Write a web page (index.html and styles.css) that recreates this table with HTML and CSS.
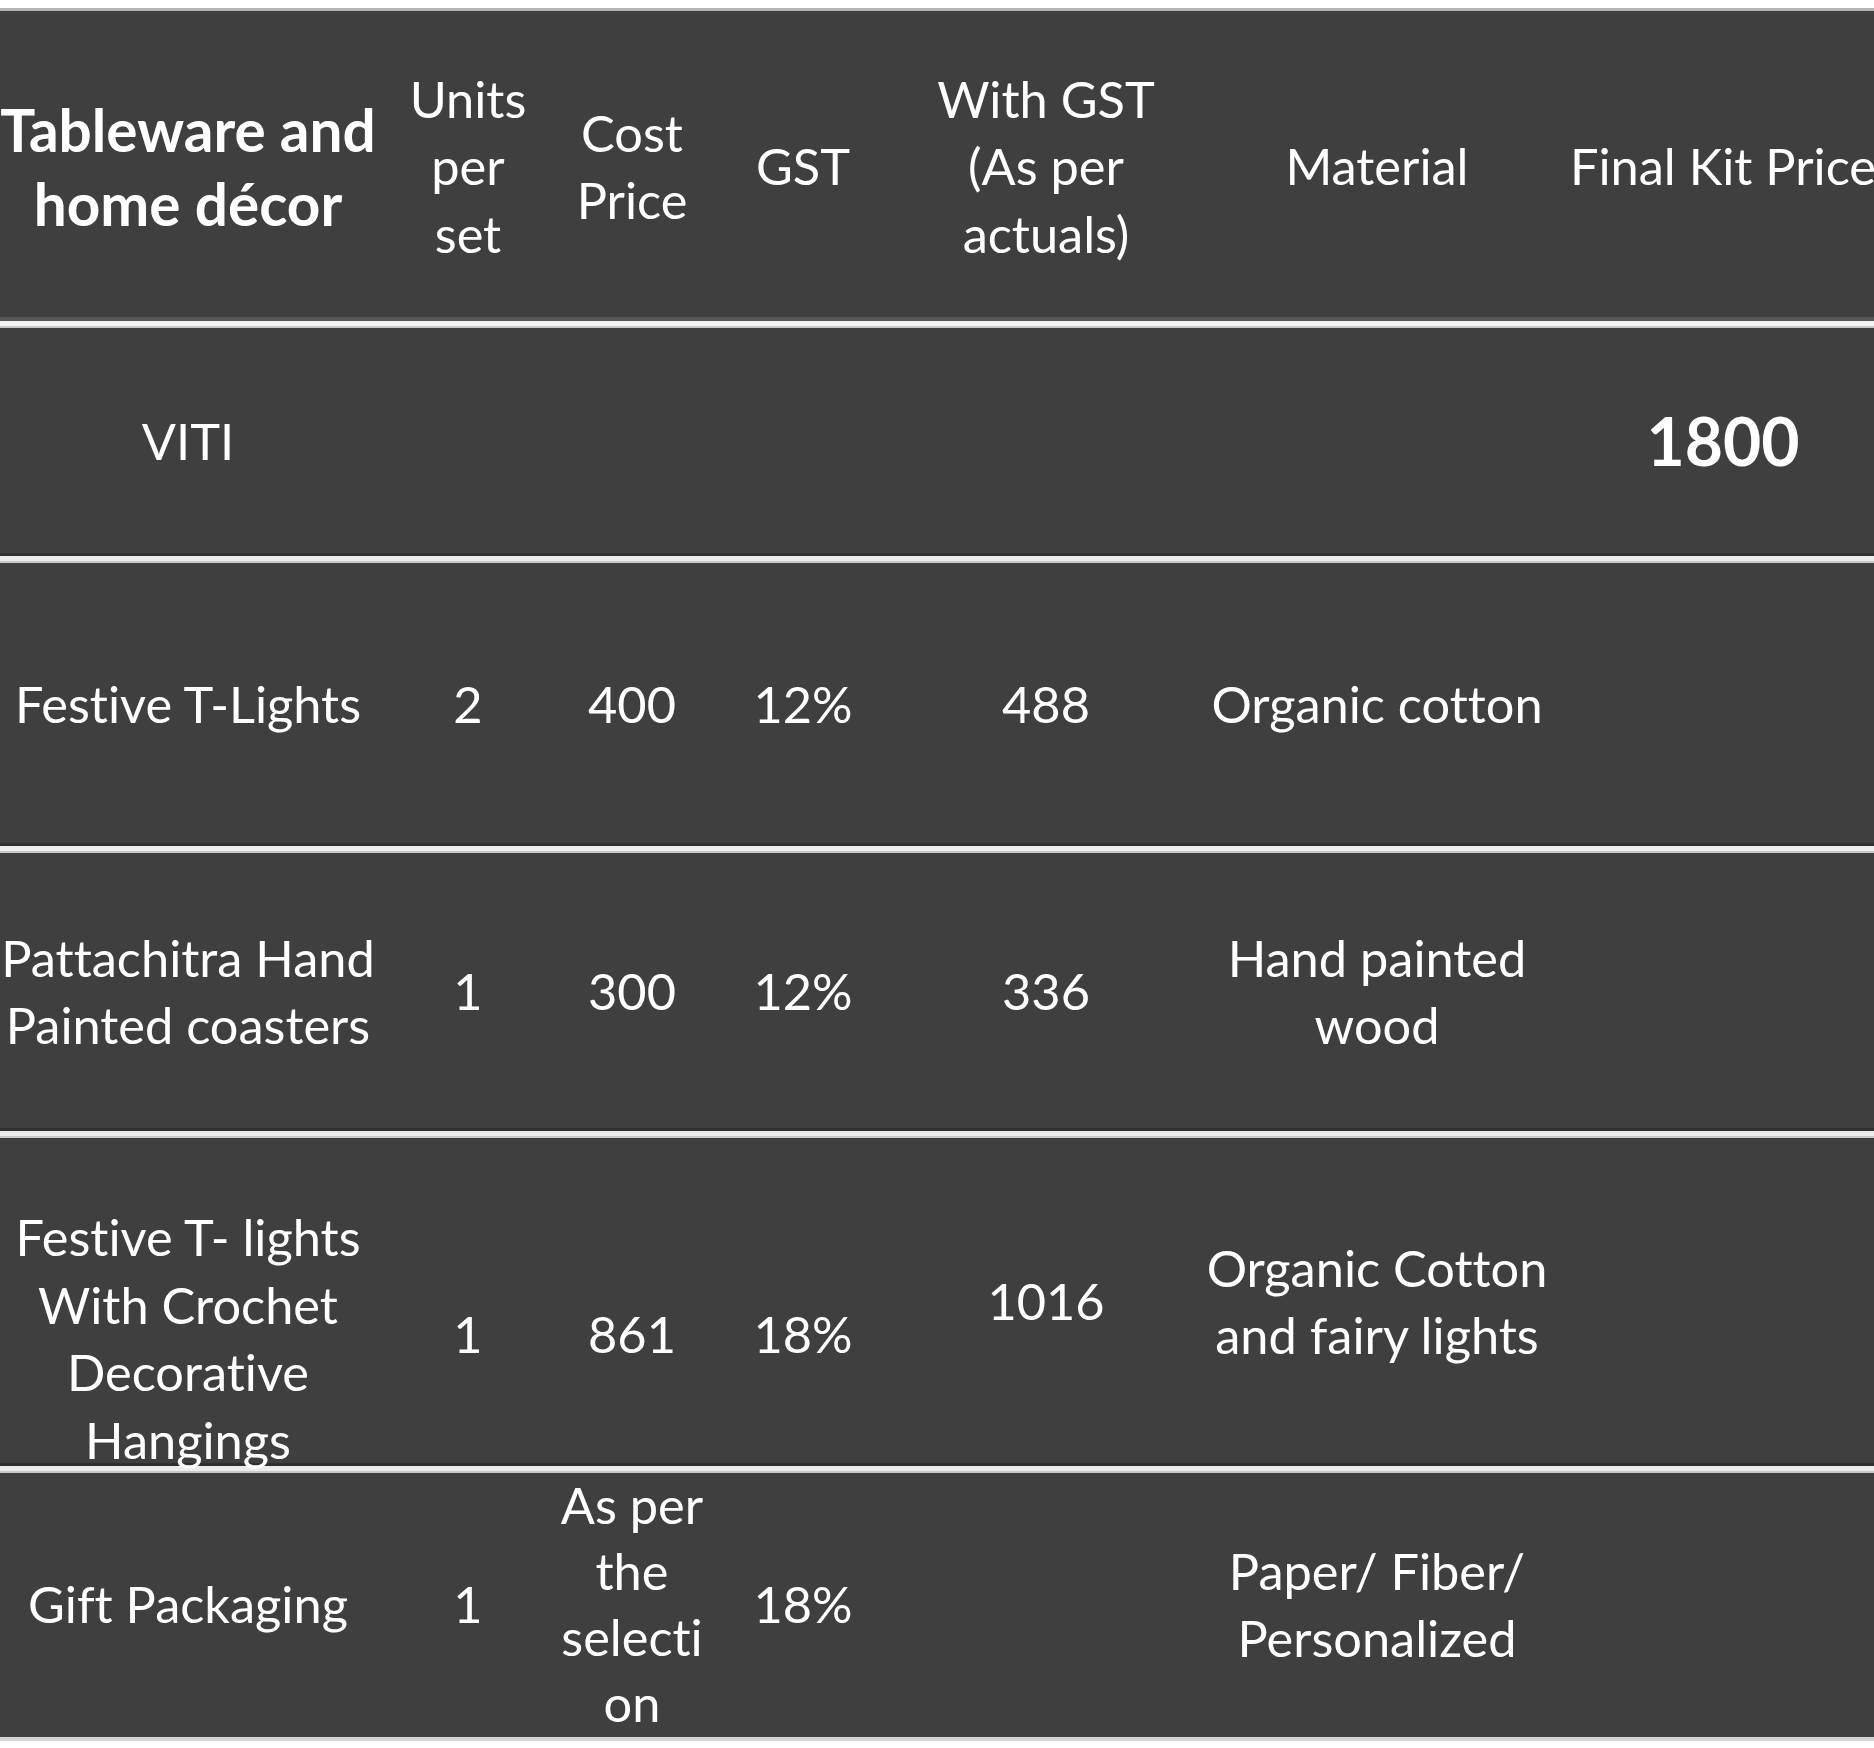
FILE: index.html
```html
<!DOCTYPE html>
<html lang="en">
<head>
<meta charset="utf-8">
<title>Tableware and home décor</title>
<link rel="stylesheet" href="styles.css">
</head>
<body>
<div class="sheet">
  <table class="kit">
    <colgroup>
      <col class="c-item">
      <col class="c-units">
      <col class="c-cost">
      <col class="c-gst">
      <col class="c-with">
      <col class="c-mat">
      <col class="c-final">
    </colgroup>
    <thead>
      <tr class="r-head">
        <th class="title">Tableware and<br>home décor</th>
        <th>Units<br>per<br>set</th>
        <th>Cost<br>Price</th>
        <th>GST</th>
        <th>With GST<br>(As per<br>actuals)</th>
        <th>Material</th>
        <th>Final Kit Price</th>
      </tr>
    </thead>
    <tbody>
      <tr class="r-viti">
        <td>VITI</td>
        <td></td>
        <td></td>
        <td></td>
        <td></td>
        <td></td>
        <td class="total">1800</td>
      </tr>
      <tr class="r-tlights">
        <td>Festive T-Lights</td>
        <td>2</td>
        <td>400</td>
        <td>12%</td>
        <td>488</td>
        <td>Organic cotton</td>
        <td></td>
      </tr>
      <tr class="r-patta">
        <td>Pattachitra Hand<br>Painted coasters</td>
        <td>1</td>
        <td>300</td>
        <td>12%</td>
        <td>336</td>
        <td>Hand painted<br>wood</td>
        <td></td>
      </tr>
      <tr class="r-crochet">
        <td class="low"><div class="sink">Festive T- lights<br>With Crochet<br>Decorative<br>Hangings</div></td>
        <td class="drop">1</td>
        <td class="drop">861</td>
        <td class="drop">18%</td>
        <td>1016</td>
        <td>Organic Cotton<br>and fairy lights</td>
        <td></td>
      </tr>
      <tr class="r-gift">
        <td>Gift Packaging</td>
        <td>1</td>
        <td class="tight">As per<br>the<br>selecti<br>on</td>
        <td>18%</td>
        <td></td>
        <td>Paper/ Fiber/<br>Personalized</td>
        <td></td>
      </tr>
    </tbody>
  </table>
</div>
</body>
</html>
```

FILE: styles.css
```css
html, body {
  margin: 0;
  padding: 0;
  background: #ffffff;
}

.sheet {
  width: 1874px;
  height: 1748px;
  padding-top: 8px;
  box-sizing: border-box;
  overflow: hidden;
}

.kit {
  table-layout: fixed;
  width: 1882px;
  border-collapse: separate;
  border-spacing: 0;
  background: #3f3f3f;
  border-top: 3px solid #b5b5b5;
  border-bottom: 4px solid #d4d4d4;
  font-family: Lato, "Open Sans", "Liberation Sans", sans-serif;
  font-size: 50.5px;
  line-height: 67.5px;
  font-variant-ligatures: none;
  font-feature-settings: "liga" 0, "clig" 0;
  color: #ffffff;
}

.c-item  { width: 376px; }
.c-units { width: 184px; }
.c-cost  { width: 144px; }
.c-gst   { width: 198px; }
.c-with  { width: 288px; }
.c-mat   { width: 374px; }
.c-final { width: 318px; }

.kit th,
.kit td {
  padding: 0;
  text-align: center;
  vertical-align: middle;
  white-space: nowrap;
  font-weight: 400;
}

.kit th {
  border-bottom: 5px solid #f4f4f4;
  box-shadow: inset 0 -4px 0 #555555;
}

.kit th.title {
  font-weight: 700;
  font-size: 58.5px;
  line-height: 74px;
}

.kit tbody td {
  border-bottom: 5px solid #ececec;
  box-shadow: inset 0 2px 0 #c9c9c9, inset 0 -3px 0 #303030;
}

.kit tbody tr:last-child td {
  border-bottom: 0;
  box-shadow: inset 0 2px 0 #c9c9c9;
}

.r-head    { height: 315px; }
.r-viti    { height: 235px; }
.r-tlights { height: 290px; }
.r-patta   { height: 285px; }
.r-crochet { height: 335px; }
.r-gift    { height: 266px; }

.kit td.total {
  font-weight: 700;
  font-size: 66px;
}

.kit td.low {
  vertical-align: bottom;
}

.sink {
  margin-bottom: -7px;
}

.kit td.drop {
  padding-top: 66px;
}

.kit td.tight {
  line-height: 66px;
}
```
